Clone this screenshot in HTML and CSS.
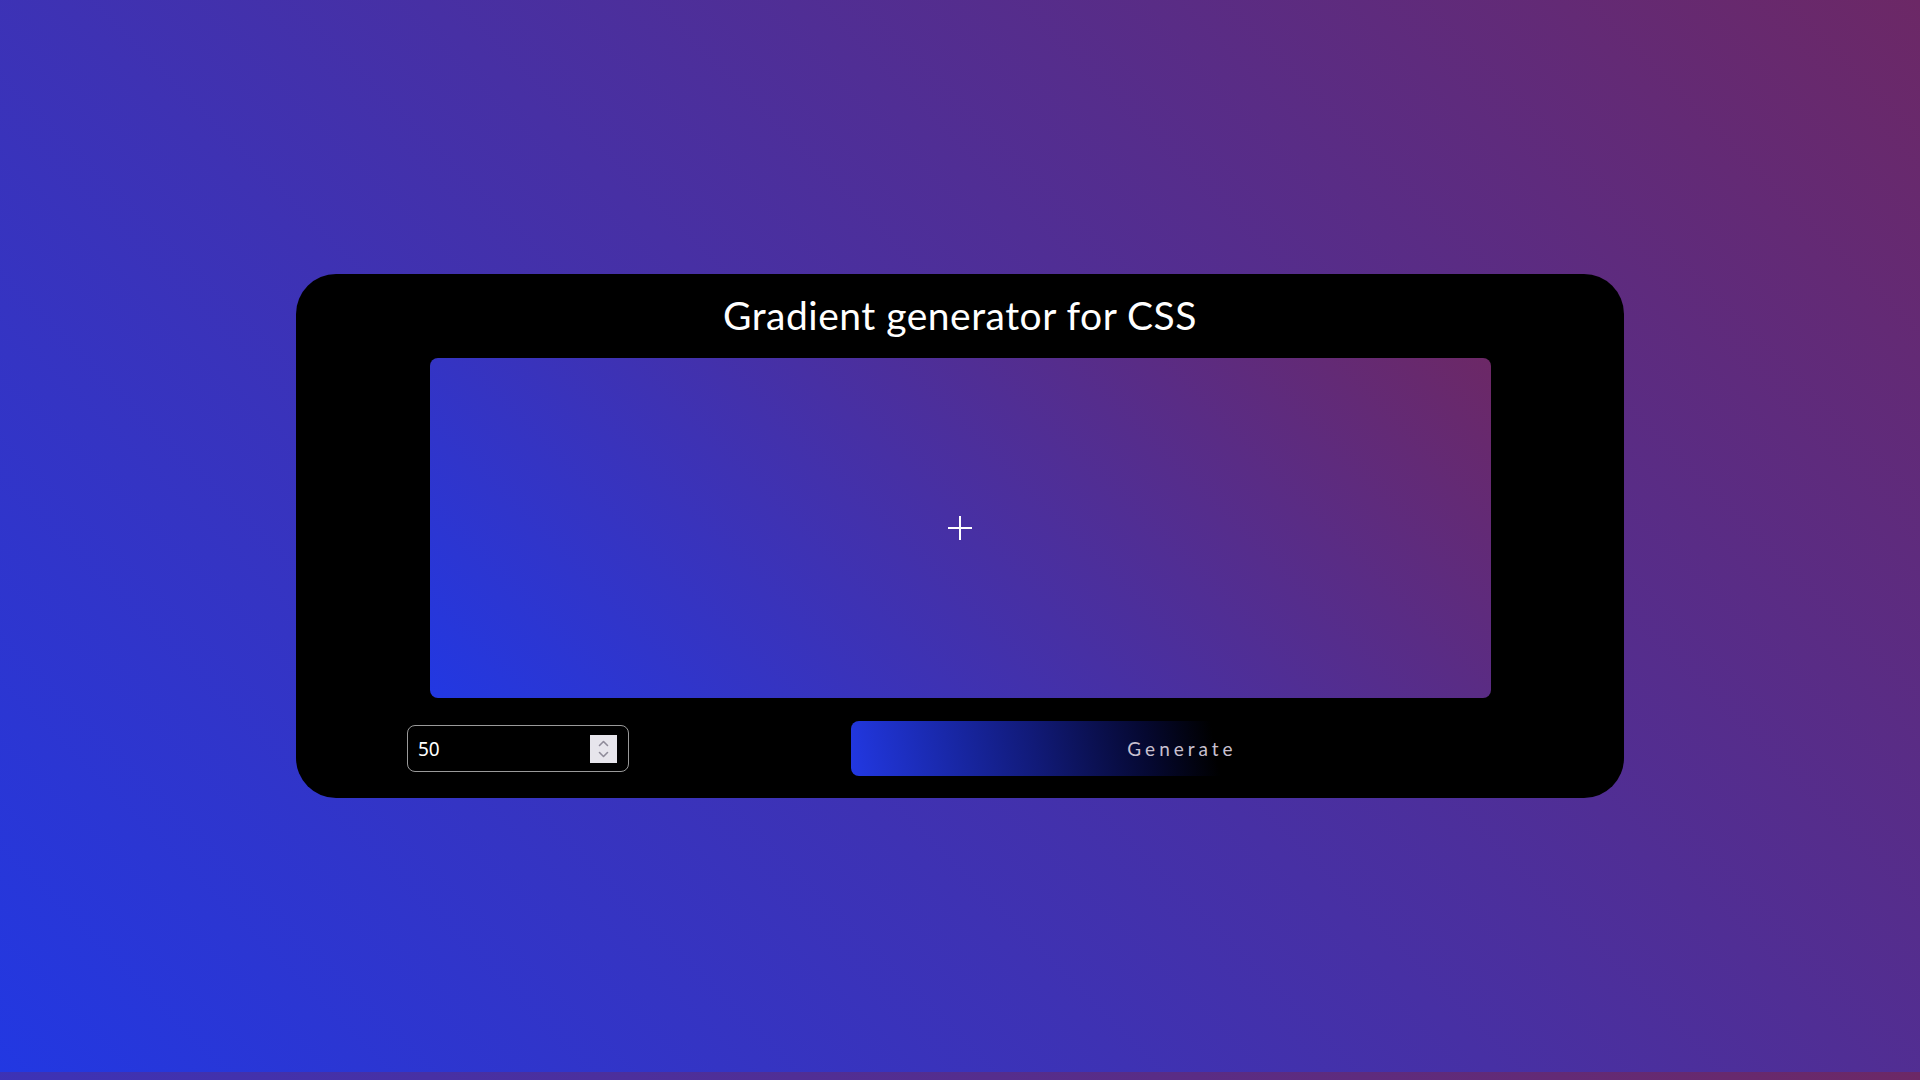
FILE: index.html
```html
<!DOCTYPE html>
<html lang="en">
<head>
<meta charset="utf-8">
<title>Gradient generator for CSS</title>
<link rel="stylesheet" href="styles.css">
</head>
<body>
<main class="page">
  <section class="card">
    <h1 class="title">Gradient generator for CSS</h1>
    <div class="preview">
      <svg class="plus" width="24" height="24" viewBox="0 0 24 24" aria-hidden="true">
        <path d="M12 0v24M0 12h24" stroke="#fff" stroke-width="2" fill="none"/>
      </svg>
    </div>
    <div class="controls">
      <div class="number">
        <input class="number-input" type="text" value="50">
        <div class="spinner">
          <svg width="27" height="28" viewBox="0 0 27 28" aria-hidden="true">
            <path d="M9.5 10.5l4-4 4 4M9.5 17.5l4 4 4-4" stroke="#8f8b99" stroke-width="1.6" fill="none" stroke-linecap="round" stroke-linejoin="round"/>
          </svg>
        </div>
      </div>
      <button class="generate" type="button">Generate</button>
    </div>
  </section>
</main>
</body>
</html>
```

FILE: styles.css
```css
html {
  background: linear-gradient(45deg, #2238e2, #6c2866) 0 0 / 100% 1072px repeat;
  min-height: 100%;
}
body {
  margin: 0;
  font-family: "Lato", "Open Sans", sans-serif;
}
.page {
  height: 1072px;
  display: flex;
  align-items: center;
  justify-content: center;
}
.card {
  width: 1328px;
  height: 524px;
  box-sizing: border-box;
  background: #000;
  border-radius: 40px;
  padding: 19px 0 22px;
  display: flex;
  flex-direction: column;
  align-items: center;
}
.title {
  margin: 0;
  color: #fff;
  font-weight: 400;
  font-size: 39px;
  line-height: 44px;
  letter-spacing: 0.5px;
}
.preview {
  margin-top: 21px;
  width: 1061px;
  height: 340px;
  border-radius: 8px;
  background: linear-gradient(45deg, #2238e2, #6c2866);
  display: flex;
  align-items: center;
  justify-content: center;
}
.plus { display: block; }
.controls {
  margin-top: 23px;
  width: 100%;
  display: flex;
  justify-content: space-around;
  align-items: center;
}
.number {
  width: 222px;
  height: 47px;
  box-sizing: border-box;
  border: 1px solid #9a9a9a;
  border-radius: 8px;
  display: flex;
  align-items: center;
  padding: 0 11px 0 10px;
}
.number-input {
  flex: 1;
  min-width: 0;
  background: transparent;
  border: 0;
  outline: none;
  color: #fff;
  font-family: "Noto Sans", sans-serif;
  font-size: 19px;
  padding: 0;
}
.spinner {
  width: 27px;
  height: 28px;
  background: #e7e5ec;
}
.spinner svg { display: block; }
.generate {
  width: 662px;
  height: 55px;
  border: 0;
  border-radius: 8px;
  background: linear-gradient(80deg, #2238e2 0%, #111a78 28%, #050830 45%, #000 55%);
  color: #c9c0d0;
  font-family: "Lato", sans-serif;
  font-size: 19px;
  font-weight: 400;
  letter-spacing: 4px;
  padding: 0;
  cursor: pointer;
}
```
